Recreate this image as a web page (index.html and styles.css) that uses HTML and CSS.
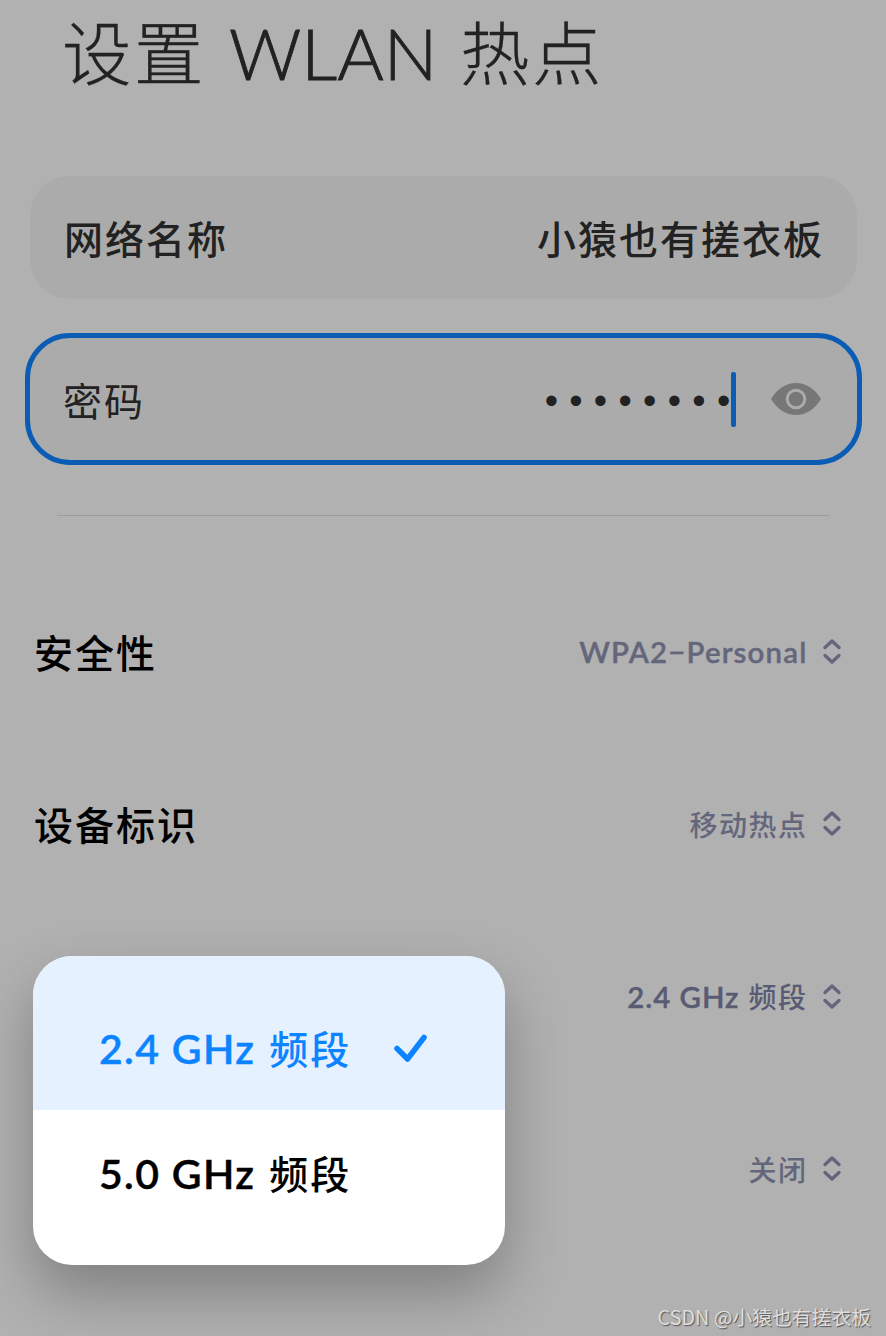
FILE: index.html
```html
<!DOCTYPE html>
<html lang="zh-CN">
<head>
    <meta charset="UTF-8">
    <meta name="viewport" content="width=device-width, initial-scale=1.0">
    <title>设置 WLAN 热点</title>
    <link rel="stylesheet" href="styles.css">
</head>
<body>
    <main class="page">
        <h1 class="title"><span>设置</span><span class="title-latin">WLAN</span><span>热点</span></h1>

        <div class="field">
            <span class="field-label">网络名称</span>
            <span class="field-value">小猿也有搓衣板</span>
        </div>

        <div class="field field-active">
            <span class="field-label">密码</span>
            <span class="password">••••••••</span>
            <span class="caret"></span>
            <svg class="eye" viewBox="0 0 50 34" width="50" height="34">
                <path fill="#777" d="M0 17C6 7 15 1 25 1s19 6 25 16c-6 10-15 16-25 16S6 27 0 17z"/>
                <circle cx="25" cy="17" r="8.8" fill="#777" stroke="#ababab" stroke-width="3"/>
            </svg>
        </div>

        <hr class="divider">

        <div class="settings">
            <div class="row">
                <span class="row-label">安全性</span>
                <span class="row-value"><span class="latin latin-wpa">WPA2−Personal</span></span>
                <svg class="arrows" viewBox="0 0 20 28" width="20" height="28"><path d="M3 9.500 10 3l7 6.500M3 17.500 10 24l7-6.500"/></svg>
            </div>
            <div class="row">
                <span class="row-label">设备标识</span>
                <span class="row-value">移动热点</span>
                <svg class="arrows" viewBox="0 0 20 28" width="20" height="28"><path d="M3 9.500 10 3l7 6.500M3 17.500 10 24l7-6.500"/></svg>
            </div>
            <div class="row">
                <span class="row-value row-value-dark"><span class="latin">2.4 GHz</span>频段</span>
                <svg class="arrows" viewBox="0 0 20 28" width="20" height="28"><path d="M3 9.500 10 3l7 6.500M3 17.500 10 24l7-6.500"/></svg>
            </div>
            <div class="row">
                <span class="row-value">关闭</span>
                <svg class="arrows" viewBox="0 0 20 28" width="20" height="28"><path d="M3 9.500 10 3l7 6.500M3 17.500 10 24l7-6.500"/></svg>
            </div>
        </div>

        <div class="menu">
            <div class="menu-item menu-item-selected">
                <span class="menu-text"><span class="latin">2.4 GHz</span>频段</span>
                <svg class="check" viewBox="0 0 36 30" width="36" height="30"><path d="M4 15.500 14.500 26 31 4.500"/></svg>
            </div>
            <div class="menu-item">
                <span class="menu-text"><span class="latin">5.0 GHz</span>频段</span>
            </div>
        </div>

        <div class="watermark">CSDN @小猿也有搓衣板</div>
    </main>
</body>
</html>
```
FILE: styles.css
```css
:root {
    --page-bg: #b1b1b1;
    --field-bg: #ababab;
    --text: #222;
    --muted: #64677b;
    --blue: #0d84ff;
    --blue-dim: #0b5cb5;
}

* {
    margin: 0;
    padding: 0;
    box-sizing: border-box;
}

body {
    background: var(--page-bg);
    color: var(--text);
    font-family: "Noto Sans CJK SC", sans-serif;
}

.page {
    position: relative;
    width: 886px;
    height: 1336px;
    overflow: hidden;
}

.title {
    display: flex;
    align-items: baseline;
    gap: 23px;
    height: 110px;
    padding-left: 62px;
    font-size: 69.5px;
    font-weight: 300;
    line-height: 100px;
    letter-spacing: 2.5px;
    white-space: nowrap;
    -webkit-text-stroke: 0.3px currentColor;
}

.title-latin {
    width: 208px;
    font-family: Lato, sans-serif;
    font-size: 71px;
    letter-spacing: 0;
    -webkit-text-stroke: 0.9px currentColor;
}

.field {
    display: flex;
    align-items: center;
    justify-content: space-between;
    height: 123px;
    margin: 66px 29px 0 30px;
    padding: 0 33px 2px 34px;
    border-radius: 40px;
    background: var(--field-bg);
    font-size: 39px;
    font-weight: 500;
    letter-spacing: 2px;
}

.field-active {
    height: 132px;
    margin: 34px 24px 0 25px;
    padding: 0 36px 0 33px;
    border: 5px solid var(--blue-dim);
    border-radius: 45px;
    font-weight: 400;
}

.password {
    margin-left: auto;
    margin-right: -10.5px;
    padding-top: 4px;
    font-family: "Liberation Sans", sans-serif;
    font-size: 38px;
    letter-spacing: 11.3px;
}

.caret {
    width: 5px;
    height: 55px;
    border-radius: 2px;
    background: var(--blue-dim);
}

.eye {
    margin-left: 35px;
}

.divider {
    height: 1px;
    margin: 50px 57px 0;
    border: none;
    background: #9c9c9c;
}

.settings {
    padding: 50px 45px 0 34px;
}

.row {
    display: flex;
    align-items: center;
    height: 172.3px;
}

.row-label {
    padding-bottom: 2px;
    color: #000;
    font-size: 39px;
    font-weight: 500;
    letter-spacing: 2px;
}

.row-value {
    display: flex;
    align-items: baseline;
    gap: 9px;
    margin-left: auto;
    padding-bottom: 1px;
    color: var(--muted);
    font-size: 28px;
    font-weight: 500;
    letter-spacing: 1.5px;
}

.row-value-dark {
    color: #585b73;
}

.latin {
    font-family: Lato, sans-serif;
    font-size: 1.05em;
    font-weight: 600;
    letter-spacing: 0.033em;
    -webkit-text-stroke: 0.4px currentColor;
}

.latin-wpa {
    letter-spacing: 0.04em;
}

.arrows {
    margin-left: 14px;
    margin-right: -0.5px;
    fill: none;
    stroke: var(--muted);
    stroke-width: 3.4;
    stroke-linecap: round;
    stroke-linejoin: round;
}

.menu {
    position: absolute;
    left: 33px;
    top: 956px;
    width: 472px;
    height: 309px;
    overflow: hidden;
    border-radius: 39px;
    background: #fff;
    box-shadow: 0 28px 60px rgba(0, 0, 0, 0.28);
}

.menu-item {
    display: flex;
    align-items: center;
    height: 127px;
    padding-left: 66px;
    color: #000;
}

.menu-item-selected {
    height: 154px;
    padding-top: 30px;
    background: #e5f1ff;
    color: var(--blue);
}

.menu-text {
    display: flex;
    align-items: baseline;
    gap: 14px;
    width: 294px;
    padding-bottom: 3px;
    font-size: 39px;
    font-weight: 500;
    letter-spacing: 2px;
}

.check {
    fill: none;
    stroke: var(--blue);
    stroke-width: 5.5;
    stroke-linecap: round;
    stroke-linejoin: round;
}

.watermark {
    position: absolute;
    right: 15px;
    bottom: 4px;
    color: #dedede;
    font-size: 19.8px;
    line-height: 30px;
    text-shadow: 1px 1px 1px #555;
}
```
